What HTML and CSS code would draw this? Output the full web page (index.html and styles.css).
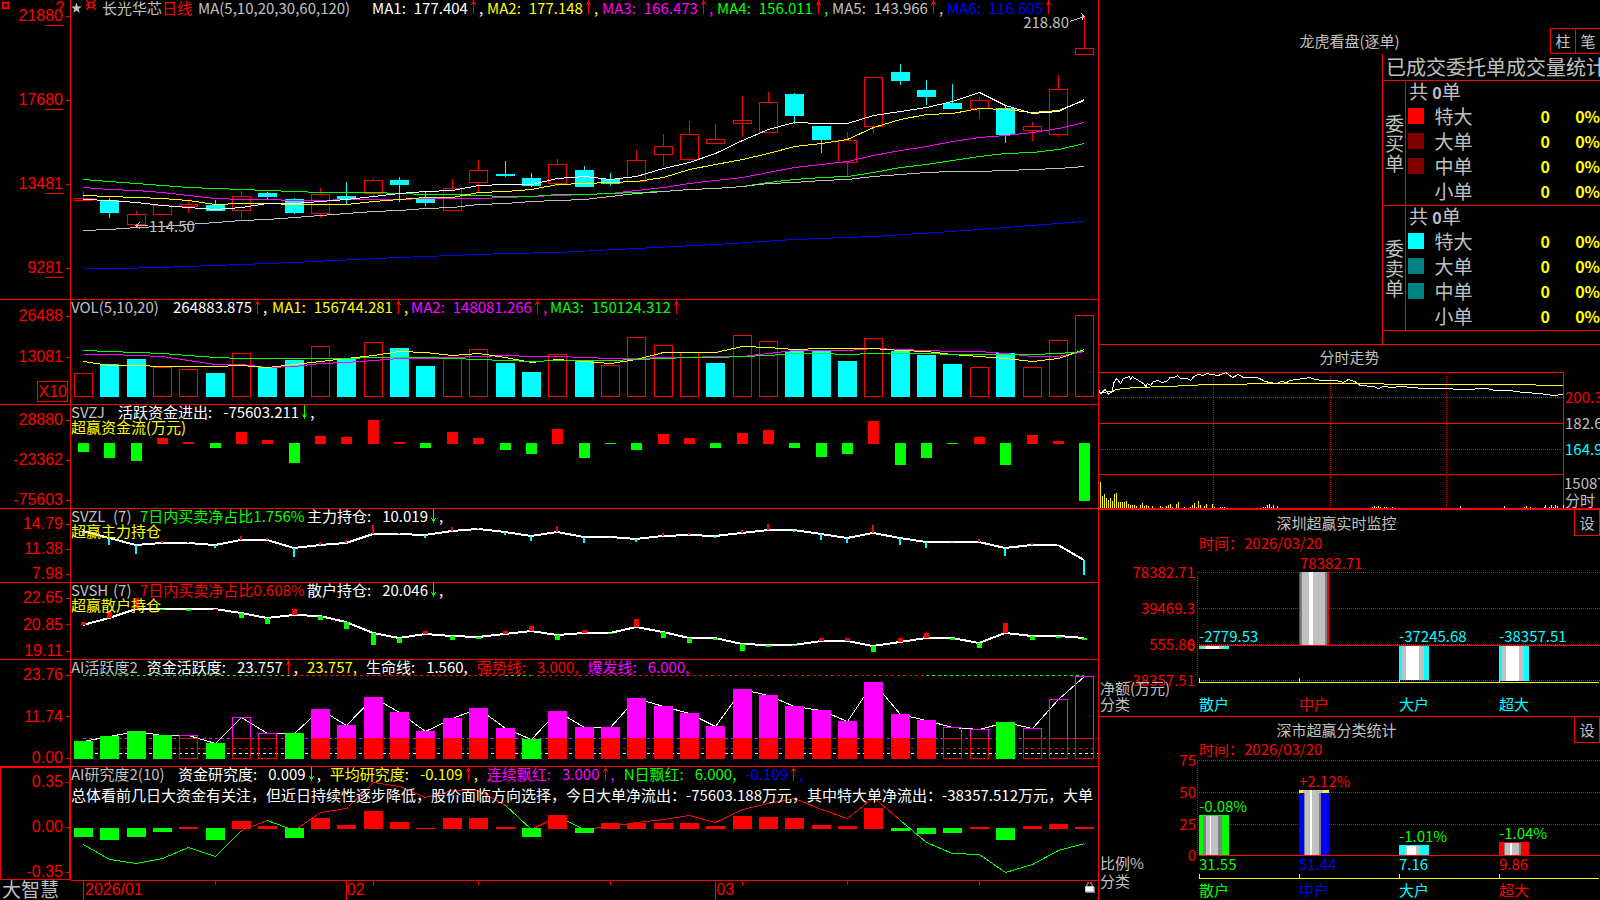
FILE: index.html
```html
<!DOCTYPE html>
<html lang="zh-CN">
<head>
<meta charset="utf-8">
<title>大智慧 - 长光华芯</title>
<link rel="stylesheet" href="styles.css">
</head>
<body>
<svg class="defs" aria-hidden="true">
  <symbol id="up" viewBox="0 0 5 14"><path d="M2 0h1v14h-1zM1 2h3v1h-3zM0 4h1v1h-1zM4 4h1v1h-1zM1 3h3v1h-3z"/></symbol>
  <symbol id="down" viewBox="0 0 5 14"><path d="M2 0h1v14h-1zM1 11h3v1h-3zM0 9h1v1h-1zM4 9h1v1h-1zM1 10h3v1h-3z"/></symbol>
</svg>
<main class="screen">
  <div class="left">
    <section class="panel main">
      <div class="axis">
        <svg class="corner" viewBox="0 0 10 10"><path d="M2 2h6v6h-6zM1 1l1 1M9 1l-1 1M1 9l1-1M9 9l-1-1" fill="none" stroke="#f00" stroke-width="2"/></svg>
        <span class="help">?</span>
        <span class="tick">218<u>80</u></span><span class="tick">176<u>80</u></span><span class="tick">134<u>81</u></span><span class="tick">92<u>81</u></span>
      </div>
      <div class="plot">
        <svg class="chart" id="kline" viewBox="71 0 1027 299" preserveAspectRatio="none"></svg>
        <div class="head">
          <div class="line">
            <svg class="star" viewBox="0 0 12 12"><path d="M6 0l1.4 4.4H12L8.300 7.100 9.700 11.500 6 8.800 2.300 11.500 3.700 7.100 0 4.400h4.600z"/></svg>
            <svg class="sun" viewBox="0 0 10 10"><path d="M2.500 2.500h5v5h-5zM0 0l2 2M10 0l-2 2M0 10l2-2M10 10l-2-2M0 5h2M8 5h2" fill="none" stroke="#f00" stroke-width="1.500"/></svg>
            <span class="stock">长光华芯<b class="red">日线</b></span>
            <span class="params">MA(5,10,20,30,60,120)</span>
            <span class="item ma white"><i>MA1:</i>177.404<svg class="arrow red"><use href="#up"/></svg>,</span>
            <span class="item ma yellow"><i>MA2:</i>177.148<svg class="arrow red"><use href="#up"/></svg>,</span>
            <span class="item ma magenta"><i>MA3:</i>166.473<svg class="arrow red"><use href="#up"/></svg>,</span>
            <span class="item ma green"><i>MA4:</i>156.011<svg class="arrow red"><use href="#up"/></svg>,</span>
            <span class="item ma"><i>MA5:</i>143.966<svg class="arrow red"><use href="#up"/></svg>,</span>
            <span class="item ma blue"><i>MA6:</i>116.605<svg class="arrow red"><use href="#up"/></svg></span>
          </div>
        </div>
        <span class="note low">114.50</span>
        <span class="note high">218.80</span>
      </div>
    </section>

    <section class="panel vol">
      <div class="axis"><span class="tick">26488</span><span class="tick">13081</span><span class="unit">X10</span></div>
      <div class="plot">
        <svg class="chart" id="vol" viewBox="71 300 1027 104" preserveAspectRatio="none"></svg>
        <div class="head"><div class="line">
          <span class="name volname">VOL(5,10,20)</span>
          <span class="item first white">264883.875<svg class="arrow red"><use href="#up"/></svg>,</span>
          <span class="item va yellow"><i>MA1:</i>156744.281<svg class="arrow red"><use href="#up"/></svg>,</span>
          <span class="item va magenta"><i>MA2:</i>148081.266<svg class="arrow red"><use href="#up"/></svg>,</span>
          <span class="item va green"><i>MA3:</i>150124.312<svg class="arrow red"><use href="#up"/></svg></span>
        </div></div>
      </div>
    </section>

    <section class="panel">
      <div class="axis"><span class="tick">28880</span><span class="tick">-23362</span><span class="tick">-75603</span></div>
      <div class="plot">
        <svg class="chart" id="flow" viewBox="71 405 1027 103" preserveAspectRatio="none"></svg>
        <div class="head">
          <div class="line"><span class="name n4">SVZJ</span><span class="item white"><i class="zh">活跃资金进出:</i>-75603.211<svg class="arrow green"><use href="#down"/></svg>,</span></div>
          <div class="line yellow">超赢资金流(万元)</div>
        </div>
      </div>
    </section>

    <section class="panel">
      <div class="axis"><span class="tick">14.79</span><span class="tick">11.38</span><span class="tick">7.98</span></div>
      <div class="plot">
        <svg class="chart" id="major" viewBox="71 509 1027 73" preserveAspectRatio="none"></svg>
        <div class="head">
          <div class="line"><span class="name n3">SVZL</span><span class="seven">(7)</span><span class="ratio green">7日内买卖净占比1.756%</span><span class="item white"><i class="zh">主力持仓:</i>10.019<svg class="arrow green"><use href="#down"/></svg>,</span></div>
          <div class="line yellow">超赢主力持仓</div>
        </div>
      </div>
    </section>

    <section class="panel">
      <div class="axis"><span class="tick">22.65</span><span class="tick">20.85</span><span class="tick">19.11</span></div>
      <div class="plot">
        <svg class="chart" id="retail" viewBox="71 583 1027 76" preserveAspectRatio="none"></svg>
        <div class="head">
          <div class="line"><span class="name n3">SVSH</span><span class="seven">(7)</span><span class="ratio red">7日内买卖净占比0.608%</span><span class="item white"><i class="zh">散户持仓:</i>20.046<svg class="arrow green"><use href="#down"/></svg>,</span></div>
          <div class="line yellow">超赢散户持仓</div>
        </div>
      </div>
    </section>

    <section class="panel">
      <div class="axis"><span class="tick">23.76</span><span class="tick">11.74</span><span class="tick">0.00</span></div>
      <div class="plot">
        <svg class="chart" id="active" viewBox="71 660 1027 106" preserveAspectRatio="none"></svg>
        <div class="head"><div class="line gaps">
          <span class="name">AI活跃度2</span>
          <span class="item white"><i class="zh">资金活跃度:</i>23.757<svg class="arrow red"><use href="#up"/></svg>,</span>
          <span class="item yellow">23.757,</span>
          <span class="item white"><i class="zh">生命线:</i>1.560,</span>
          <span class="item red"><i class="zh">强势线:</i>3.000,</span>
          <span class="item magenta"><i class="zh">爆发线:</i>6.000,</span>
        </div></div>
      </div>
    </section>

    <section class="panel">
      <div class="axis selected"><span class="tick">0.35</span><span class="tick">0.00</span><span class="tick">-0.35</span></div>
      <div class="plot">
        <svg class="chart" id="study" viewBox="71 767 1027 113" preserveAspectRatio="none"></svg>
        <div class="head">
          <div class="line gaps">
            <span class="name study">AI研究度2(10)</span>
            <span class="item white"><i class="zh">资金研究度:</i>0.009<svg class="arrow green"><use href="#down"/></svg>,</span>
            <span class="item yellow"><i class="zh">平均研究度:</i>-0.109<svg class="arrow red"><use href="#up"/></svg>,</span>
            <span class="item magenta"><i class="zh">连续飘红:</i>3.000<svg class="arrow red"><use href="#up"/></svg>,</span>
            <span class="item green"><i class="zh">N日飘红:</i>6.000,</span>
            <span class="item blue">-0.109<svg class="arrow red"><use href="#up"/></svg>,</span>
          </div>
          <div class="line white summary">总体看前几日大资金有关注，但近日持续性逐步降低，股价面临方向选择，今日大单净流出：-75603.188万元，其中特大单净流出：-38357.512万元，大单</div>
        </div>
      </div>
    </section>

    <footer class="dates">
      <strong class="brand">大智慧</strong>
      <div class="plot">
        <svg class="chart" id="dates" viewBox="71 881 1027 19" preserveAspectRatio="none"></svg>
        <div class="months"><span class="m1">2026/01</span><span class="m2">02</span><span class="m3">03</span>
          <svg class="lock" viewBox="0 0 11 12"><path d="M2 4V1h5v3" fill="none" stroke="#c0c0c0" stroke-width="1" stroke-dasharray="2 1"/><path fill="#c0c0c0" d="M0 4h9v6h-9z"/><path fill="#fff" d="M1 5h7v4h-7z"/><path d="M9.500 5v5.500h-9" fill="none" stroke="#808080"/></svg>
        </div>
      </div>
    </footer>
  </div>

  <aside class="right">
    <section class="orders">
      <header class="caption wide">龙虎看盘(逐单)</header>
      <div class="buttons"><button type="button">柱</button><button type="button">笔</button></div>
      <div class="book">
        <h2>已成交委托单成交量统计</h2>
        <table>
          <tbody>
            <tr><th rowspan="5" class="side">委买单</th><td colspan="4" class="total">共 <b>0</b>单</td></tr>
            <tr><td class="sw"><span class="swatch s1"></span></td><th>特大</th><td class="num">0</td><td class="num pct">0%</td></tr>
            <tr><td class="sw"><span class="swatch s2"></span></td><th>大单</th><td class="num">0</td><td class="num pct">0%</td></tr>
            <tr><td class="sw"><span class="swatch s2"></span></td><th>中单</th><td class="num">0</td><td class="num pct">0%</td></tr>
            <tr><td class="sw"></td><th>小单</th><td class="num">0</td><td class="num pct">0%</td></tr>
          </tbody>
          <tbody>
            <tr><th rowspan="5" class="side">委卖单</th><td colspan="4" class="total">共 <b>0</b>单</td></tr>
            <tr><td class="sw"><span class="swatch s3"></span></td><th>特大</th><td class="num">0</td><td class="num pct">0%</td></tr>
            <tr><td class="sw"><span class="swatch s4"></span></td><th>大单</th><td class="num">0</td><td class="num pct">0%</td></tr>
            <tr><td class="sw"><span class="swatch s4"></span></td><th>中单</th><td class="num">0</td><td class="num pct">0%</td></tr>
            <tr><td class="sw"></td><th>小单</th><td class="num">0</td><td class="num pct">0%</td></tr>
          </tbody>
        </table>
      </div>
    </section>
    <section class="intraday">
      <header class="caption wide">分时走势</header>
      <svg class="figure" id="minute" viewBox="1099 370 501 138" preserveAspectRatio="xMinYMin meet"></svg>
    </section>
    <section class="stats">
      <header class="caption">深圳超赢实时监控</header><button type="button">设</button>
      <svg class="figure" id="net" viewBox="1099 537 501 179" preserveAspectRatio="xMinYMin meet"></svg>
    </section>
    <section class="stats">
      <header class="caption">深市超赢分类统计</header><button type="button">设</button>
      <svg class="figure" id="share" viewBox="1099 744 501 156" preserveAspectRatio="xMinYMin meet"></svg>
    </section>
  </aside>
</main>
<script src="charts.js"></script>
</body>
</html>
```

FILE: styles.css
```css
* { box-sizing: border-box; }
body {
  margin: 0;
  background: #000;
  color: #c0c0c0;
  font: 15px/16px "Noto Sans CJK SC", "Noto Sans", sans-serif;
}
.defs { display: none; }
.red { color: #f00; }
.green { color: #0f0; }
.yellow { color: #ff0; }
.white { color: #fff; }
.magenta { color: #f0f; }
.blue { color: #00f; }

.screen {
  display: grid;
  grid-template-columns: minmax(0, 1fr) 501px;
  grid-template-rows: minmax(0, 1fr);
  height: 100vh;
  min-height: 700px;
}
.left {
  display: grid;
  grid-template-rows:
    minmax(0, 299fr) minmax(0, 105fr) minmax(0, 104fr) minmax(0, 74fr)
    minmax(0, 77fr) minmax(0, 107fr) minmax(0, 114fr) minmax(0, 20fr);
  min-width: 0;
  border-right: 1px solid #f00;
}
.panel {
  display: grid;
  grid-template-columns: 70px minmax(0, 1fr);
  grid-template-rows: minmax(0, 1fr);
  min-height: 0;
  border-top: 1px solid #f00;
}
.panel.main { border-top: 0; }

.axis {
  position: relative;
  display: flex;
  flex-direction: column;
  justify-content: space-between;
  align-items: flex-end;
  padding-top: 7px;
  color: #f00;
  font: 16px/16px "Liberation Sans", Arial, sans-serif;
}
.main .axis { padding: 8px 0 23px; }
.vol .axis { justify-content: flex-start; padding-top: 8px; }
.vol .tick:first-child { margin-bottom: 25px; }
.axis.selected { box-shadow: inset 1px 1px #f00, inset -1px -1px #f00; }
.tick { display: flex; align-items: center; height: 16px; }
.tick::after { content: ""; width: 4px; height: 1px; margin-left: 3px; background: #f00; }
.tick u { text-decoration: none; height: 18px; margin-bottom: -2px; border-bottom: 1px solid #f00; }
.unit {
  margin: auto 2px 2px 0;
  padding: 2px 0 1px 1px;
  border: 1px solid #f00;
}
.corner { position: absolute; left: 1px; top: 1px; width: 9px; height: 9px; }
.help { position: absolute; right: 5px; top: 0; font-weight: bold; color: #c00; }

.plot {
  position: relative;
  display: grid;
  grid-template: minmax(0, 1fr) / minmax(0, 1fr);
  min-width: 0;
  min-height: 0;
  border-left: 1px solid #f00;
}
.chart, .head { grid-area: 1 / 1; }
.chart { display: block; width: 100%; height: 100%; min-height: 0; shape-rendering: crispEdges; }
.chart * { vector-effect: non-scaling-stroke; }
.head { overflow-x: clip; min-width: 0; align-self: start; }
.line { display: flex; height: 15px; line-height: 14px; white-space: nowrap; }
.main .line { line-height: 16px; }
.line.gaps { gap: 9px; }
.line.summary { display: block; height: 20px; line-height: 20px; margin-top: 3px; }
.item { display: flex; }
.item i { font-style: normal; padding-right: 8px; }
.item i.zh { padding-right: 11px; }
.item.ma { width: 115px; }
.item.va { width: 139px; }
.item.first { width: 99px; }
.arrow { width: 5px; height: 14px; margin: 0 3px; fill: currentColor; shape-rendering: crispEdges; flex: none; }
.star { width: 11px; height: 12px; margin-top: 2px; fill: #c0c0c0; }
.sun { width: 10px; height: 10px; margin-left: 4px; }
.stock { margin-left: 6px; width: 96px; }
.stock b { font-weight: normal; }
.params { width: 174px; }
.volname { width: 102px; }
.study { width: 98px; }
.n4 { width: 47px; }
.n3 { width: 42px; }
.seven { width: 27px; }
.ratio { width: 167px; }
.note { position: absolute; }
.note.low { left: 7.600%; top: 218px; }
.note.high { right: 29px; top: 14px; }

.dates {
  display: grid;
  grid-template: minmax(0, 1fr) / 70px minmax(0, 1fr);
  min-height: 0;
}
.brand { font-weight: normal; font-size: 19px; line-height: 18px; padding-left: 2px; }
.dates .plot { border-top: 1px solid #f00; border-left-color: #000; }
.months {
  grid-area: 1 / 1;
  display: grid;
  grid-template: minmax(0, 1fr) / 14px 262fr 370fr 368fr 12px;
  padding-right: 2px;
  color: #f00;
  font: 16px/18px "Liberation Sans", Arial, sans-serif;
}
.m1 { grid-column: 2; }
.m3 { grid-column: 4; }
.lock { grid-column: 5; justify-self: end; width: 11px; height: 12px; margin-top: 1px; }

.right {
  display: grid;
  grid-template-rows: minmax(0, 345fr) minmax(0, 164fr) minmax(0, 207fr) minmax(0, 184fr);
  min-width: 0;
}
.right section { min-height: 0; overflow: hidden; }
.caption { text-align: center; }
button {
  width: 26px;
  height: 26px;
  padding: 0;
  border: 1px solid #f00;
  background: #000;
  color: #c0c0c0;
  font: inherit;
}
.orders {
  display: grid;
  grid-template-rows: 28px 26px minmax(0, 1fr);
  grid-template-columns: minmax(0, 1fr) 218px;
  border-bottom: 1px solid #f00;
}
.orders .caption { grid-area: 2 / 1 / 3 / 3; line-height: 26px; }
.buttons { grid-area: 2 / 2; justify-self: end; display: flex; }
.buttons button { width: 25px; border-right: 0; }
.book { grid-area: 3 / 2; border-left: 1px solid #f00; overflow: hidden; }
.book h2 {
  margin: 0 0 0 1px;
  padding-left: 2px;
  font-size: 20px;
  font-weight: normal;
  line-height: 26px;
  white-space: nowrap;
}
.book table {
  width: calc(100% - 1px);
  margin-left: 1px;
  border-collapse: collapse;
  border-bottom: 1px solid #f00;
  font-size: 19px;
  line-height: 20px;
}
.book tbody { border-top: 1px solid #f00; }
.book tr { height: 25px; }
.book th, .book td { padding: 0; font-weight: normal; text-align: left; vertical-align: top; }
.book .side {
  width: 20px;
  padding: 0 1px;
  line-height: 20px;
  border-right: 1px solid #f00;
  word-break: break-all;
  vertical-align: middle;
}
.book .total { padding-left: 3px; }
.book .total b { font-size: 16px; }
.book .sw { width: 29px; padding: 2px 0 0 2px; }
.swatch { display: block; width: 16px; height: 16px; }
.s1 { background: #f00; }
.s2 { background: #800000; }
.s3 { background: #0ff; }
.s4 { background: #008080; }
.book .num { color: #ff0; font-size: 16px; font-weight: bold; text-align: right; }
.book .pct { width: 50px; }

.intraday { display: grid; grid-template: 25px minmax(0, 1fr) / minmax(0, 1fr); border-bottom: 1px solid #f00; }
.intraday .caption { line-height: 23px; }
.figure {
  display: block;
  width: 100%;
  height: 100%;
  min-height: 0;
  shape-rendering: crispEdges;
  font-size: 15px;
}
.stats {
  display: grid;
  grid-template-rows: 27px minmax(0, 1fr);
  grid-template-columns: minmax(0, 1fr) 26px;
  border-top: 1px solid #f00;
}
.stats .caption { line-height: 25px; }
.stats button { border-top: 0; }
.stats .figure { grid-column: 1 / 3; }
```

FILE: charts.js
```js
const NS = 'http://www.w3.org/2000/svg';
const RED = '#f00', GREEN = '#0f0', CYAN = '#0ff', WHITE = '#fff', YELLOW = '#ff0', MAGENTA = '#f0f', GRAY = '#c0c0c0', BLUE = '#00f';
const $ = id => document.getElementById(id);
function add(svg, tag, attrs, text) {
  const e = document.createElementNS(NS, tag);
  for (const k in attrs) e.setAttribute(k, attrs[k]);
  if (text !== undefined) e.textContent = text;
  svg.appendChild(e);
  return e;
}
const X = i => Math.round(82.9 + 26.35 * i);
const fill = (s, x, y, w, h, c) => add(s, 'rect', { x, y, width: w, height: Math.max(1, h), fill: c });
const box = (s, x, y, w, h, c) => add(s, 'rect', { x: x + .5, y: y + .5, width: w - 1, height: Math.max(1, h - 1), fill: 'none', stroke: c });
const line = (s, pts, c, w = 1, dash) => {
  const a = { points: pts.map(p => p.join(',')).join(' '), fill: 'none', stroke: c, 'stroke-width': w };
  if (dash) a['stroke-dasharray'] = dash;
  return add(s, 'polyline', a);
};
/* values are stored in thirds of a unit, measured from the panel base */
const at = base => v => Math.round(base + v / 3);
const series = (s, vals, y, c, w) => line(s, vals.map((v, i) => [X(i) + .5, y(v) + .5]), c, w);
const label = (s, x, y, t, c, anchor = 'start') => add(s, 'text', { x, y: y + 5, fill: c, 'text-anchor': anchor }, t);

/* daily candles: kind, body top, body bottom, high, low */
const candles = `r594,602,572,602 c600,639,594,654 r642,675,633,675 r615,644,611,644 r612,620,597,640 c614,633,600,633 r588,632,572,654 c579,591,576,598 c597,639,594,642 r582,641,563,654 c588,597,545,612 r540,581,534,588 c540,555,531,606 c597,609,575,618 r564,632,537,632 r510,548,480,577 c522,528,483,531 c534,558,519,561 r492,551,477,558 c510,561,498,561 c537,552,519,558 r480,545,450,545 r438,464,402,498 r402,479,363,484 r417,431,372,431 r360,371,288,411 r306,398,276,398 c282,348,279,372 c378,420,378,459 r420,488,396,527 r231,380,231,399 c216,243,192,255 c270,291,240,315 c309,327,252,327 r300,326,291,357 c324,405,318,429 r378,392,366,423 r267,404,225,411 r144,164,50,164`.split(' ');
{
  const s = $('kline'), y = at(0);
  candles.forEach((d, i) => {
    const up = d[0] === 'r', [t, b, h, l] = d.slice(1).split(',').map(Number).map(y), c = up ? RED : CYAN;
    if (h < t) fill(s, X(i), h, 1, t - h, c);
    if (l > b) fill(s, X(i), b, 1, l - b, c);
    (up ? box : fill)(s, X(i) - 9, t, 19, b - t, c);
  });
  const blue = [[0,805],[1.5,805],[4,797],[8,786],[12,772],[16,760],[18,755],[21,743],[24,733],[27,718],[30,708],[33,692],[36,676],[38,664]];
  line(s, blue.map(p => [X(p[0]), y(p[1]) + .5]), BLUE);
  series(s, [562,566,570,577,584,593,597,598,600,600,597,597,597,595,595,594,591,587,584,582,578,571,561,550,541,530,515,502,491,484,466,451,437,422,410,404,397,383,365], y, MAGENTA);
  series(s, [538,543,549,554,560,564,567,570,573,577,577,577,580,582,583,586,589,588,583,583,580,577,572,566,563,558,547,538,532,527,515,502,491,480,469,460,455,446,428], y, GREEN);
  series(s, [691,688,682,678,672,665,660,656,651,645,640,634,629,624,620,613,609,603,600,596,588,580,573,566,563,558,550,545,541,536,527,521,517,514,512,511,508,505,499], y, GRAY);
  series(s, [586,588,592,595,601,612,610,610,611,613,613,604,597,592,590,577,572,567,553,550,547,542,531,508,493,478,458,437,430,416,382,357,343,338,325,328,337,329,301], y, YELLOW);
  series(s, [597,600,606,615,622,628,620,608,609,604,597,588,580,574,570,556,553,552,533,528,538,527,504,486,459,421,386,367,370,370,346,332,321,302,277,314,340,333,298], y, WHITE);
  line(s, [[148, 225.5], [136, 225.5]], GRAY);
  line(s, [[140, 222], [136, 225.5], [140, 229]], GRAY);
  line(s, [[1070, 21.5], [1084, 16.5]], GRAY);
  line(s, [[1081, 13], [1084, 16.5], [1082, 20]], GRAY);
}

{
  const s = $('vol'), y = at(290);
  'r250 c223 c207 r232 r238 c249 r190 c231 c210 r169 c205 r157 c174 c228 r205 r178 c219 c246 r193 c213 r226 r142 r166 r187 c219 r136 r154 c182 c182 c213 r145 c182 c195 c222 r232 c189 r232 r151 r76'.split(' ').forEach((d, i) => {
    const up = d[0] === 'r', t = y(+d.slice(1));
    (up ? box : fill)(s, X(i) - 9, t, 19, 397 - t, up ? RED : CYAN);
  });
  series(s, [193,193,196,197,211,223,223,230,227,220,217,211,205,205,202,199,196,199,199,202,205,203,202,200,199,197,188,181,181,181,173,177,181,184,184,190,199,197,184], y, MAGENTA);
  series(s, [214,224,226,227,229,229,226,230,223,212,203,196,184,187,196,190,202,217,207,213,220,206,187,187,187,169,172,178,175,175,175,179,184,193,197,204,214,205,178], y, YELLOW);
  series(s, [181,182,186,189,196,200,205,205,205,205,204,202,202,202,205,207,211,213,211,211,211,206,205,202,202,198,194,190,190,193,190,190,190,191,193,193,193,190,184], y, GREEN);
}

function columns(s, y, data, w, down, up) {
  data.split(' ').forEach((d, i) => {
    const v = y(+d.slice(1)), x = X(i) - (w >> 1);
    d[0] === 'g' ? fill(s, x, y(down), w, v - y(down), GREEN) : fill(s, x, v, w, y(up) - v, RED);
  });
}
columns($('flow'), at(290), 'g486 g504 g513 r444 r456 g474 r426 r450 g519 r438 r441 r390 r456 g474 r426 r444 g480 g492 r417 g504 g462 g480 r432 r444 g474 r429 r420 g474 g501 g492 r393 g525 g504 g462 r441 g525 r435 r453 g633', 11, 459, 462);

function holding(s, y, vals, ticks, w, low) {
  const pts = vals.map((v, i) => [X(i), y(v)]);
  line(s, pts, WHITE, 2);
  ticks.split(' ').forEach((v, i) => {
    const a = y(vals[i]), b = y(+v), x = X(i) - (w >> 1);
    fill(s, x, Math.min(a, b), w, Math.abs(a - b), b > a ? low : RED);
  });
}
holding($('major'), at(290), [724,745,766,759,759,766,750,749,774,766,760,732,731,735,723,718,727,738,725,741,742,748,739,735,738,730,719,720,733,744,728,745,756,756,755,774,766,765,809],
  '738 765 792 753 756 774 738 744 801 756 750 705 728 744 711 714 735 753 708 759 745 756 729 729 744 720 702 726 750 759 705 765 774 759 747 798 758 762 855', 2, CYAN);
holding($('retail'), at(580), [134,115,87,87,87,87,99,115,104,108,127,159,174,163,168,171,163,152,165,158,159,140,157,173,174,193,195,195,183,182,199,187,173,174,189,160,168,168,174],
  '126 96 54 90 93 86 114 132 87 120 147 195 189 153 180 177 153 138 180 150 162 117 174 189 180 213 201 198 174 174 216 174 159 180 204 129 180 174 180', 5, GREEN);

{
  const s = $('active'), y = at(580);
  const bars = 'g483 g468 g453 g465 h466 g489 h412 h460 g459 f387 f435 f351 f396 f453 f414 f384 f444 g477 f393 f441 f441 f354 f378 f399 f438 f327 f345 f378 f390 f423 f306 f402 f420 h442 h448 g426 h445 h358 h287'.split(' ');
  [[475, MAGENTA], [505, RED], [520, WHITE]].forEach(([v, c]) => line(s, [[83, y(v) + .5], [1098, y(v) + .5]], c, 1, '3 3'));
  [[0, 8, GREEN], [8, 16, RED], [16, 17, GREEN], [17, 32, RED], [32, 38, GREEN]].forEach(([a, b, c]) => line(s, [[X(a), 675.5], [X(b), 675.5]], c, 1, '3 3'));
  series(s, bars.map(b => +b.slice(1)), y, WHITE);
  bars.forEach((d, i) => {
    const x = X(i) - 9, t = y(+d.slice(1));
    if (d[0] === 'g') fill(s, x, t, 19, 759 - t, GREEN);
    else if (d[0] === 'f') { fill(s, x, t, 19, 738 - t, MAGENTA); fill(s, x, 738, 19, 21, RED); }
    else { line(s, [[x + .5, 738], [x + .5, t + .5], [x + 18.5, t + .5], [x + 18.5, 738]], MAGENTA); box(s, x, 738, 19, 21, RED); }
  });
}

{
  const s = $('study'), y = at(580);
  const v = [793,838,850,835,802,829,750,720,750,697,684,607,617,650,630,631,676,748,708,746,739,727,716,706,727,688,668,655,687,715,652,719,786,819,823,877,853,810,788];
  [[0,6,GREEN],[6,7,RED],[7,8,GREEN],[8,16,RED],[16,17,GREEN],[17,18,RED],[18,19,GREEN],[19,31,RED],[31,38,GREEN]].forEach(([a, b, c]) =>
    line(s, v.slice(a, b + 1).map((p, k) => [X(a + k) + .5, y(p) + .5]), c));
  columns(s, y, 'g771 g780 g771 g756 r741 g780 r723 r738 g774 r714 r735 r693 r726 r744 r714 r714 r741 g771 r705 g759 r729 r729 r729 r729 r738 r708 r711 r714 r735 r738 r684 g753 g762 g759 r741 g780 r738 r732 r741', 19, 744, 747);
}

[[0,19],[1,4],[5,4],[10,19],[11,4],[15,4],[20,4],[24,19],[25,4],[29,4],[34,4]].forEach(([i, h]) => fill($('dates'), X(i), 881, 1, h, RED));

/* intraday */
{
  const s = $('minute');
  [423, 474].forEach(y => fill(s, 1099, y, 464, 1, RED));
  [397, 449].forEach(y => line(s, [[1099, y + .5], [1563, y + .5]], RED, 1, '1 1'));
  [1213, 1330, 1446].forEach(x => line(s, [[x + .5, 372], [x + .5, 508]], RED, 1, '1 1'));
  fill(s, 1099, 372, 465, 1, RED);
  fill(s, 1563, 372, 1, 136, RED);
  const p = str => str.split(' ').map(q => q.split(',')).map(([a, b]) => [1090 + a / 3, Math.round(335 + b / 3) + .5]);
  line(s, p('28,170 68,168 78,163 105,158 135,155 230,153 300,150 348,146 600,145 606,143 880,143 885,146 1335,146 1340,149 1418,149'), YELLOW);
  line(s, p('28,165 33,175 45,163 56,178 66,168 72,140 80,130 92,145 100,130 108,125 118,123 122,132 127,123 135,130 142,132 150,138 160,145 168,152 172,143 182,150 190,137 205,136 215,142 230,137 240,127 252,125 263,119 272,130 290,130 302,135 312,123 325,118 340,119 350,115 365,118 385,119 400,114 408,112 415,117 428,127 445,118 460,127 475,125 500,125 515,133 525,139 540,140 560,143 575,139 590,142 600,134 620,133 640,130 660,127 675,132 700,136 740,136 760,140 775,133 795,138 810,149 850,152 866,160 880,154 905,157 930,153 970,156 1000,160 1060,160 1120,162 1190,160 1215,165 1260,166 1300,170 1350,173 1390,180 1418,178'), WHITE);
  const bar = (a, b) => fill(s, Math.floor(1090 + a / 3), Math.round(335 + b / 3), 1, 508 - Math.round(335 + b / 3), YELLOW);
  [441,483,477,489,495,489,498,477,474,501,501,501,501,498,507,510,510,510,513,519,510,504,513,510,513,519,513,519,519,519,513,515,519,513,510,507,516,519,508,501,520,519,516,519,519,516,510,504,516,498,510,519,513,507,519,519,507,516,519,519,516,516,516].forEach((v, i) => bar(31 + i * 6, v));
  '435 441 447 453 463 475 568 574 586 724 730 742 766 784 802 808 814 820 826 836 878 902 920 932 952 958 964 970 976 982 990 1008 1020 1050 1056 1062 1070 1080 1092 1116 1134 1150 1164 1180 1200 1206 1212 1236 1254 1266 1290 1296 1314 1326 1332 1338 1344 1350 1356 1372'.split(' ').forEach(a => bar(+a, 519));
  '520,516 526,516 532,510 538,507 544,516 550,510 562,513 848,516 854,513 860,516 866,513 872,516 884,516 890,516 908,516 1110,513 1242,513 1302,516 1308,513 1320,516 1362,516 1366,510 1378,516 1384,510 1390,516 1396,510 1402,513 1420,510'.split(' ').forEach(q => bar(...q.split(',').map(Number)));
  label(s, 1565, 398, '200.3', RED);
  label(s, 1565, 424, '182.6', GRAY);
  label(s, 1565, 450, '164.9', CYAN);
  label(s, 1564, 484, '15087', GRAY);
  label(s, 1565, 501, '分时', GRAY);
}

const bands = (s, y, h, parts) => parts.forEach(([a, b, c]) => fill(s, a, y, b - a, h, c));
const yAxis = (s, top, bottom) => line(s, [[1197.5, top], [1197.5, bottom]], RED, 1, '1 1');
const guide = (s, y) => line(s, [[1199, y + .5], [1600, y + .5]], RED, 1, '1 1');
function xAxis(s, y) {
  fill(s, 1199, y, 400, 1, YELLOW);
  [1199, 1299, 1399, 1499].forEach(x => fill(s, x, y - 4, 1, 4, YELLOW));
}
{
  const s = $('net');
  label(s, 1199, 544, '时间：2026/03/20', RED);
  [572, 608, 644, 680].forEach(y => guide(s, y));
  yAxis(s, 572, 678);
  label(s, 1195, 573, '78382.71', RED, 'end');
  label(s, 1195, 609, '39469.3', RED, 'end');
  label(s, 1195, 645, '555.88', RED, 'end');
  label(s, 1195, 646, '0', RED, 'end');
  label(s, 1195, 681, '-38357.51', RED, 'end');
  xAxis(s, 682);
  bands(s, 646, 3, [[1199,1229,CYAN],[1202,1224,GRAY],[1206,1219,WHITE]]);
  bands(s, 572, 73, [[1299,1329,RED],[1300,1327,'#808080'],[1302,1325,GRAY],[1309,1313,WHITE]]);
  bands(s, 646, 34, [[1399,1429,CYAN],[1402,1424,GRAY],[1406,1419,WHITE]]);
  bands(s, 646, 35, [[1499,1529,CYAN],[1502,1524,GRAY],[1506,1519,WHITE]]);
  fill(s, 1199, 645, 401, 1, RED);
  label(s, 1199, 637, '-2779.53', CYAN);
  label(s, 1300, 564, '78382.71', RED);
  label(s, 1399, 637, '-37245.68', CYAN);
  label(s, 1499, 637, '-38357.51', CYAN);
  [['散户', CYAN], ['中户', RED], ['大户', CYAN], ['超大', CYAN]].forEach(([t, c], i) => label(s, 1199 + i * 100, 705, t, c));
  label(s, 1100, 689, '净额(万元)', GRAY);
  label(s, 1100, 705, '分类', GRAY);
}
{
  const s = $('share');
  label(s, 1199, 750, '时间：2026/03/20', RED);
  [760, 792, 824].forEach(y => guide(s, y));
  yAxis(s, 760, 855);
  [['75', 761], ['50', 793], ['25', 825], ['0', 856]].forEach(([t, y]) => label(s, 1196, y, t, RED, 'end'));
  bands(s, 815, 40, [[1199,1229,GREEN]]);
  bands(s, 816, 39, [[1203,1222,'#808080'],[1206,1218,GRAY],[1210,1211,WHITE]]);
  bands(s, 790, 65, [[1299,1329,BLUE],[1304,1321,'#808080'],[1305,1319,GRAY]]);
  bands(s, 790, 3, [[1299,1329,YELLOW],[1303,1323,GRAY]]);
  bands(s, 790, 65, [[1310,1312,WHITE]]);
  bands(s, 845, 10, [[1399,1429,CYAN]]);
  bands(s, 846, 9, [[1405,1419,GRAY],[1407,1416,WHITE]]);
  bands(s, 842, 13, [[1499,1529,RED]]);
  bands(s, 843, 12, [[1504,1521,'#808080'],[1505,1519,GRAY],[1510,1512,WHITE]]);
  fill(s, 1199, 855, 401, 1, RED);
  label(s, 1199, 807, '-0.08%', GREEN);
  label(s, 1299, 782, '+2.12%', RED);
  label(s, 1399, 837, '-1.01%', GREEN);
  label(s, 1499, 834, '-1.04%', GREEN);
  xAxis(s, 878);
  [['31.55', '散户', GREEN], ['51.44', '中户', BLUE], ['7.16', '大户', CYAN], ['9.86', '超大', RED]].forEach(([v, t, c], i) => {
    label(s, 1199 + i * 100, 865, v, c);
    label(s, 1199 + i * 100, 891, t, c);
  });
  label(s, 1100, 864, '比例%', GRAY);
  label(s, 1100, 882, '分类', GRAY);
}
```
